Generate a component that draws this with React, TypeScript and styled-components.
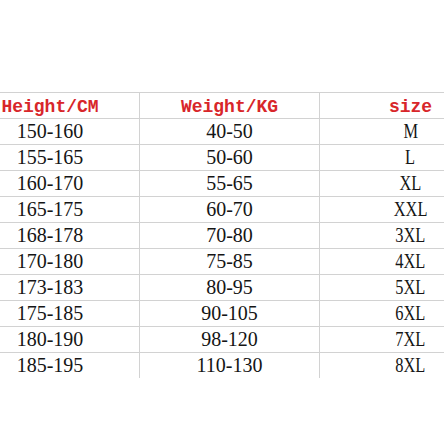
import styled, { createGlobalStyle } from 'styled-components';

const rows = [
  ['150-160', '40-50', 'M'],
  ['155-165', '50-60', 'L'],
  ['160-170', '55-65', 'XL'],
  ['165-175', '60-70', 'XXL'],
  ['168-178', '70-80', '3XL'],
  ['170-180', '75-85', '4XL'],
  ['173-183', '80-95', '5XL'],
  ['175-185', '90-105', '6XL'],
  ['180-190', '98-120', '7XL'],
  ['185-195', '110-130', '8XL'],
];

const Global = createGlobalStyle`
  html, body {
    margin: 0;
    padding: 0;
    background: #ffffff;
    overflow: hidden;
  }
`;

const Page = styled.div`
  width: 444px;
  height: 444px;
  padding-top: 92px;
  box-sizing: border-box;
  overflow: hidden;
`;

const Table = styled.div`
  margin-left: -39px;
  width: 540px;
`;

const Row = styled.div`
  display: grid;
  grid-template-columns: 178px 180px 182px;
  height: 26px;
  box-sizing: border-box;
  border-top: 1px solid #d2d2d2;
`;

const Cell = styled.div<{ divider?: boolean }>`
  display: flex;
  align-items: center;
  justify-content: center;
  border-left: ${p => (p.divider ? '1px solid #d2d2d2' : 'none')};
  font-family: 'Liberation Serif', serif;
  font-size: 20px;
  color: #151515;
  white-space: nowrap;
`;

const HeadCell = styled(Cell)`
  font-family: 'Liberation Mono', monospace;
  font-size: 18px;
  font-weight: bold;
  color: #d8262a;
  padding-top: 3px;
`;

const SizeText = styled.span`
  display: inline-block;
  transform: scaleX(0.82);
`;

export default function App() {
  return (
    <>
      <Global />
      <Page>
        <Table>
          <Row>
            <HeadCell>Height/CM</HeadCell>
            <HeadCell divider>Weight/KG</HeadCell>
            <HeadCell divider>size</HeadCell>
          </Row>
          {rows.map((r, i) => (
            <Row key={i}>
              <Cell>{r[0]}</Cell>
              <Cell divider>{r[1]}</Cell>
              <Cell divider>
                <SizeText>{r[2]}</SizeText>
              </Cell>
            </Row>
          ))}
        </Table>
      </Page>
    </>
  );
}
